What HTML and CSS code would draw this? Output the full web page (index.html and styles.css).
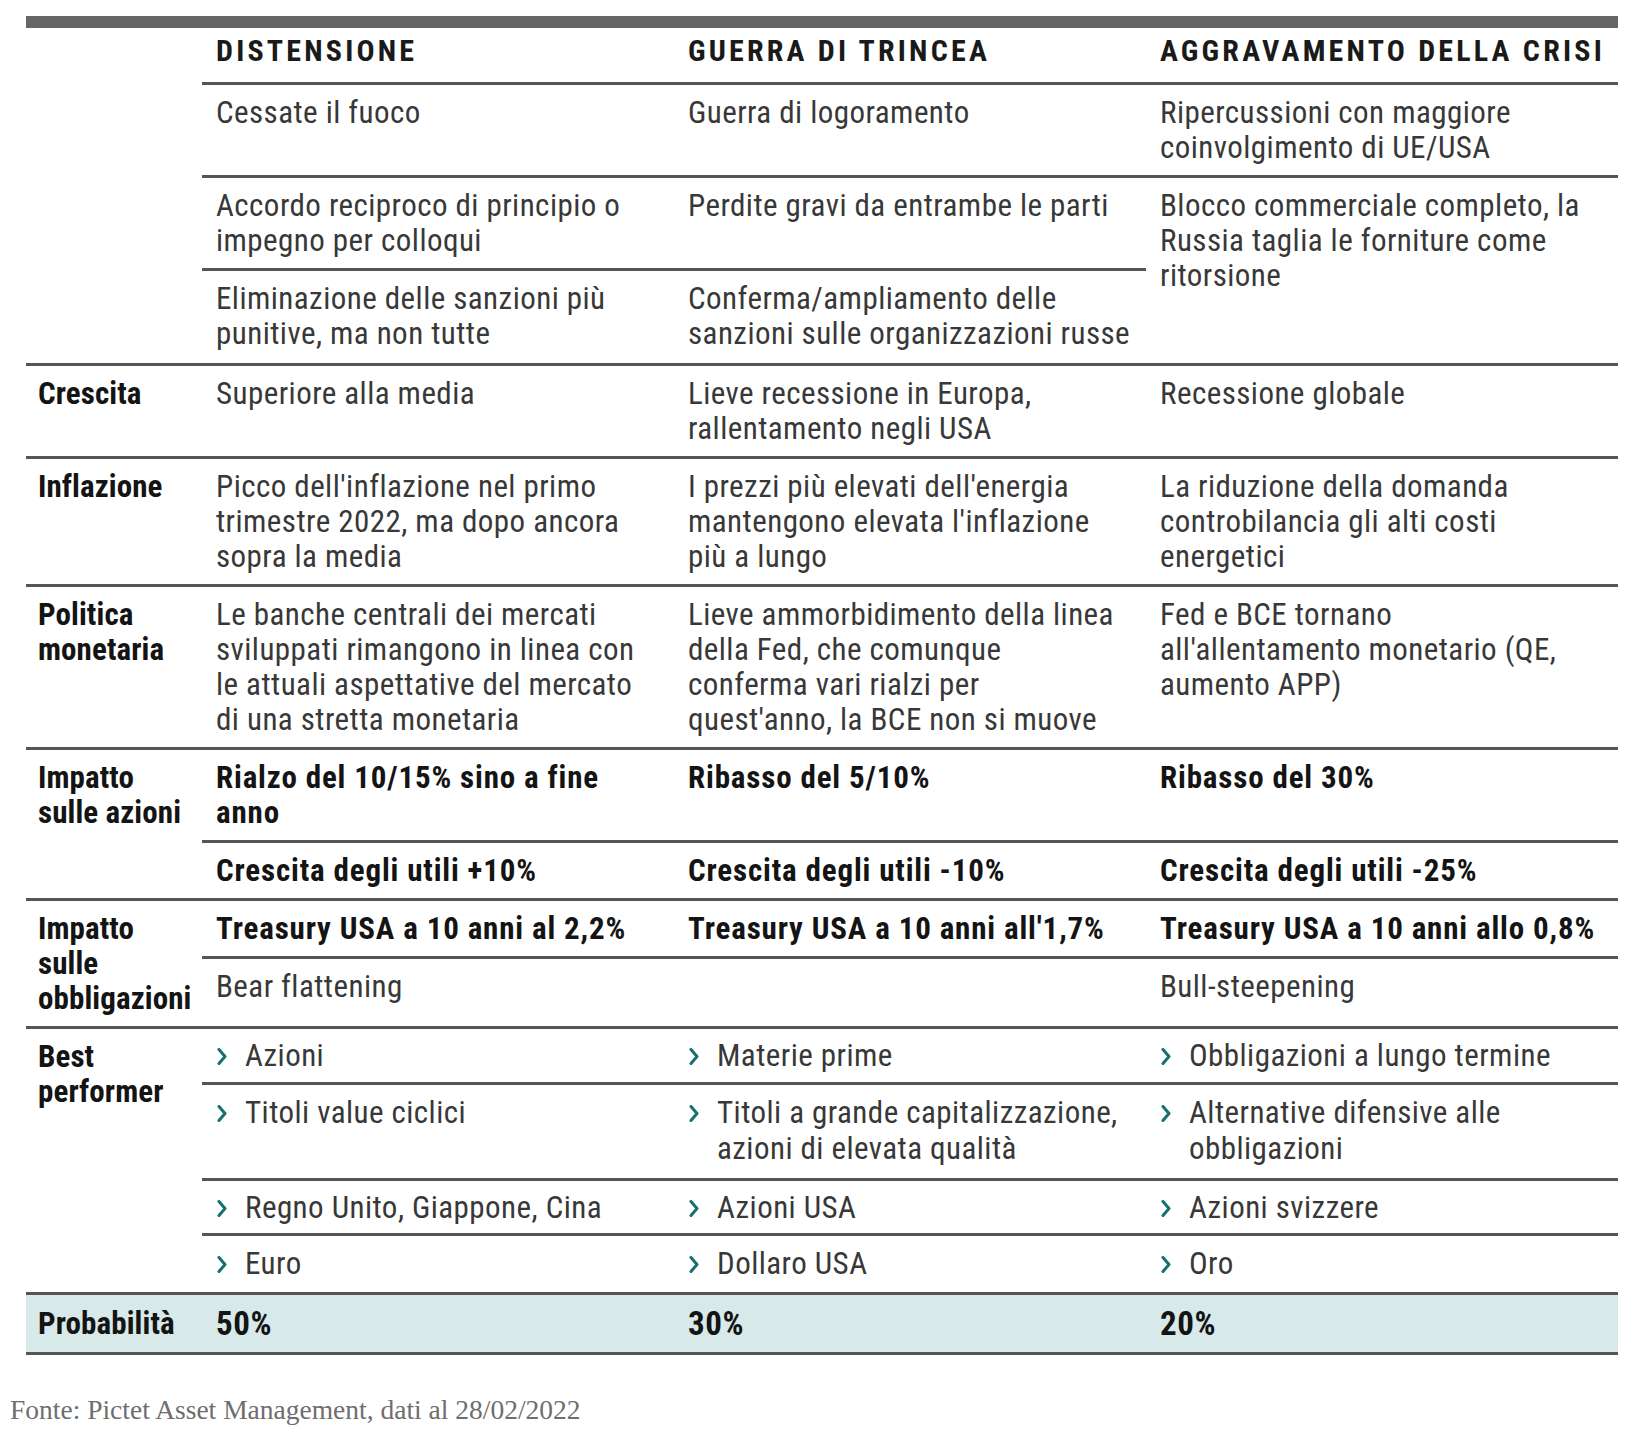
FILE: index.html
```html
<!DOCTYPE html>
<html lang="it">
<head>
<meta charset="utf-8">
<title>Scenari</title>
<link rel="stylesheet" href="styles.css">
</head>
<body>
<div class="page">
  <div class="topbar"></div>
  <table class="scen">
    <colgroup><col class="c-lab"><col class="c-s"><col class="c-s"><col class="c-s"></colgroup>
    <thead>
      <tr class="head"><th class="lab"></th><th>DISTENSIONE</th><th>GUERRA DI TRINCEA</th><th>AGGRAVAMENTO DELLA CRISI</th></tr>
    </thead>
    <tbody>
      <tr><th class="lab nob" rowspan="3"></th><td>Cessate il fuoco</td><td>Guerra di logoramento</td><td>Ripercussioni con maggiore<br>coinvolgimento di UE/USA</td></tr>
      <tr><td>Accordo reciproco di principio o<br>impegno per colloqui</td><td>Perdite gravi da entrambe le parti</td><td rowspan="2">Blocco commerciale completo, la<br>Russia taglia le forniture come<br>ritorsione</td></tr>
      <tr class="rc"><td>Eliminazione delle sanzioni più<br>punitive, ma non tutte</td><td>Conferma/ampliamento delle<br>sanzioni sulle organizzazioni russe</td></tr>
      <tr><th class="lab">Crescita</th><td>Superiore alla media</td><td>Lieve recessione in Europa,<br>rallentamento negli USA</td><td>Recessione globale</td></tr>
      <tr><th class="lab">Inflazione</th><td>Picco dell'inflazione nel primo<br>trimestre 2022, ma dopo ancora<br>sopra la media</td><td>I prezzi più elevati dell'energia<br>mantengono elevata l'inflazione<br>più a lungo</td><td>La riduzione della domanda<br>controbilancia gli alti costi<br>energetici</td></tr>
      <tr><th class="lab">Politica<br>monetaria</th><td>Le banche centrali dei mercati<br>sviluppati rimangono in linea con<br>le attuali aspettative del mercato<br>di una stretta monetaria</td><td>Lieve ammorbidimento della linea<br>della Fed, che comunque<br>conferma vari rialzi per<br>quest'anno, la BCE non si muove</td><td>Fed e BCE tornano<br>all'allentamento monetario (QE,<br>aumento APP)</td></tr>
      <tr><th class="lab" rowspan="2">Impatto<br>sulle azioni</th><td class="b">Rialzo del 10/15% sino a fine<br>anno</td><td class="b">Ribasso del 5/10%</td><td class="b">Ribasso del 30%</td></tr>
      <tr><td class="b">Crescita degli utili +10%</td><td class="b">Crescita degli utili -10%</td><td class="b">Crescita degli utili -25%</td></tr>
      <tr><th class="lab" rowspan="2">Impatto<br>sulle<br>obbligazioni</th><td class="b">Treasury USA a 10 anni al 2,2%</td><td class="b">Treasury USA a 10 anni all'1,7%</td><td class="b">Treasury USA a 10 anni allo 0,8%</td></tr>
      <tr class="tall"><td>Bear flattening</td><td></td><td>Bull-steepening</td></tr>
      <tr class="bp bp1"><th class="lab" rowspan="4">Best<br>performer</th>
        <td><div class="pt"><svg class="chev" viewBox="0 0 10 17"><polyline points="2,1.5 8,8.5 2,15.5"/></svg><span>Azioni</span></div></td>
        <td><div class="pt"><svg class="chev" viewBox="0 0 10 17"><polyline points="2,1.5 8,8.5 2,15.5"/></svg><span>Materie prime</span></div></td>
        <td><div class="pt"><svg class="chev" viewBox="0 0 10 17"><polyline points="2,1.5 8,8.5 2,15.5"/></svg><span>Obbligazioni a lungo termine</span></div></td>
      </tr>
      <tr class="bp bp2">
        <td><div class="pt"><svg class="chev" viewBox="0 0 10 17"><polyline points="2,1.5 8,8.5 2,15.5"/></svg><span>Titoli value ciclici</span></div></td>
        <td><div class="pt"><svg class="chev" viewBox="0 0 10 17"><polyline points="2,1.5 8,8.5 2,15.5"/></svg><span>Titoli a grande capitalizzazione,<br>azioni di elevata qualità</span></div></td>
        <td><div class="pt"><svg class="chev" viewBox="0 0 10 17"><polyline points="2,1.5 8,8.5 2,15.5"/></svg><span>Alternative difensive alle<br>obbligazioni</span></div></td>
      </tr>
      <tr class="bp">
        <td><div class="pt"><svg class="chev" viewBox="0 0 10 17"><polyline points="2,1.5 8,8.5 2,15.5"/></svg><span>Regno Unito, Giappone, Cina</span></div></td>
        <td><div class="pt"><svg class="chev" viewBox="0 0 10 17"><polyline points="2,1.5 8,8.5 2,15.5"/></svg><span>Azioni USA</span></div></td>
        <td><div class="pt"><svg class="chev" viewBox="0 0 10 17"><polyline points="2,1.5 8,8.5 2,15.5"/></svg><span>Azioni svizzere</span></div></td>
      </tr>
      <tr class="bp bp4">
        <td><div class="pt"><svg class="chev" viewBox="0 0 10 17"><polyline points="2,1.5 8,8.5 2,15.5"/></svg><span>Euro</span></div></td>
        <td><div class="pt"><svg class="chev" viewBox="0 0 10 17"><polyline points="2,1.5 8,8.5 2,15.5"/></svg><span>Dollaro USA</span></div></td>
        <td><div class="pt"><svg class="chev" viewBox="0 0 10 17"><polyline points="2,1.5 8,8.5 2,15.5"/></svg><span>Oro</span></div></td>
      </tr>
      <tr class="prob"><th class="lab">Probabilità</th><td class="b">50%</td><td class="b">30%</td><td class="b">20%</td></tr>
    </tbody>
  </table>
  <p class="source">Fonte: Pictet Asset Management, dati al 28/02/2022</p>
</div>
</body>
</html>
```

FILE: styles.css
```css
html, body {
  margin: 0;
  padding: 0;
  background: #ffffff;
}

.page {
  width: 1644px;
  padding-top: 16px;
}

.topbar {
  margin-left: 26px;
  width: 1592px;
  height: 12px;
  background: #666666;
}

.scen {
  margin-left: 26px;
  width: 1592px;
  table-layout: fixed;
  border-collapse: separate;
  border-spacing: 0;
  font-family: "Roboto Condensed", "DejaVu Sans Condensed", "Liberation Sans", sans-serif;
  font-stretch: condensed;
  font-size: 31px;
  line-height: 35px;
  color: #383838;
  letter-spacing: 0.45px;
}

.c-lab { width: 176px; }
.c-s { width: 472px; }

.scen th,
.scen td {
  text-align: left;
  vertical-align: top;
  white-space: nowrap;
  font-weight: normal;
  padding: 10px 8px 10px 14px;
}

.scen tbody th,
.scen tbody td {
  border-top: 3px solid #555555;
}

.scen tbody th.nob {
  border-top: none;
}

.scen th.lab {
  padding-left: 12px;
  font-weight: bold;
  color: #141414;
  letter-spacing: 0.1px;
}

.scen .head th {
  padding: 5px 0 14px 14px;
  font-size: 30px;
  font-weight: bold;
  color: #1a1a1a;
  letter-spacing: 3.2px;
}

.scen td.b {
  font-weight: bold;
  color: #141414;
  letter-spacing: 0.85px;
}

.scen tr.rc td {
  padding-bottom: 12px;
}

.scen tr.tall {
  height: 70px;
}

.scen tr.bp td {
  line-height: 36px;
  padding-top: 9px;
  padding-bottom: 7px;
}

.scen tr.bp1 td {
  padding-bottom: 8px;
}

.scen tr.bp2 td {
  padding-top: 10px;
  padding-bottom: 11px;
}

.scen tr.bp4 td {
  padding-top: 10px;
  padding-bottom: 10px;
}

.pt {
  display: flex;
  align-items: flex-start;
}

.chev {
  flex: none;
  width: 10px;
  height: 17px;
  margin: 10px 18px 0 1px;
}

.chev polyline {
  fill: none;
  stroke: #17706d;
  stroke-width: 3;
  stroke-linecap: round;
  stroke-linejoin: round;
}

.scen tr.prob th,
.scen tr.prob td {
  background: #d8e9e9;
  border-bottom: 3px solid #555555;
  padding-top: 11px;
  padding-bottom: 11px;
}

.scen tr.prob td.b {
  font-size: 33px;
  letter-spacing: 0.6px;
}

.source {
  margin: 39px 0 0 10px;
  font-family: "Liberation Serif", "Times New Roman", serif;
  font-size: 27.5px;
  line-height: 32px;
  color: #6e6e6e;
}
```
